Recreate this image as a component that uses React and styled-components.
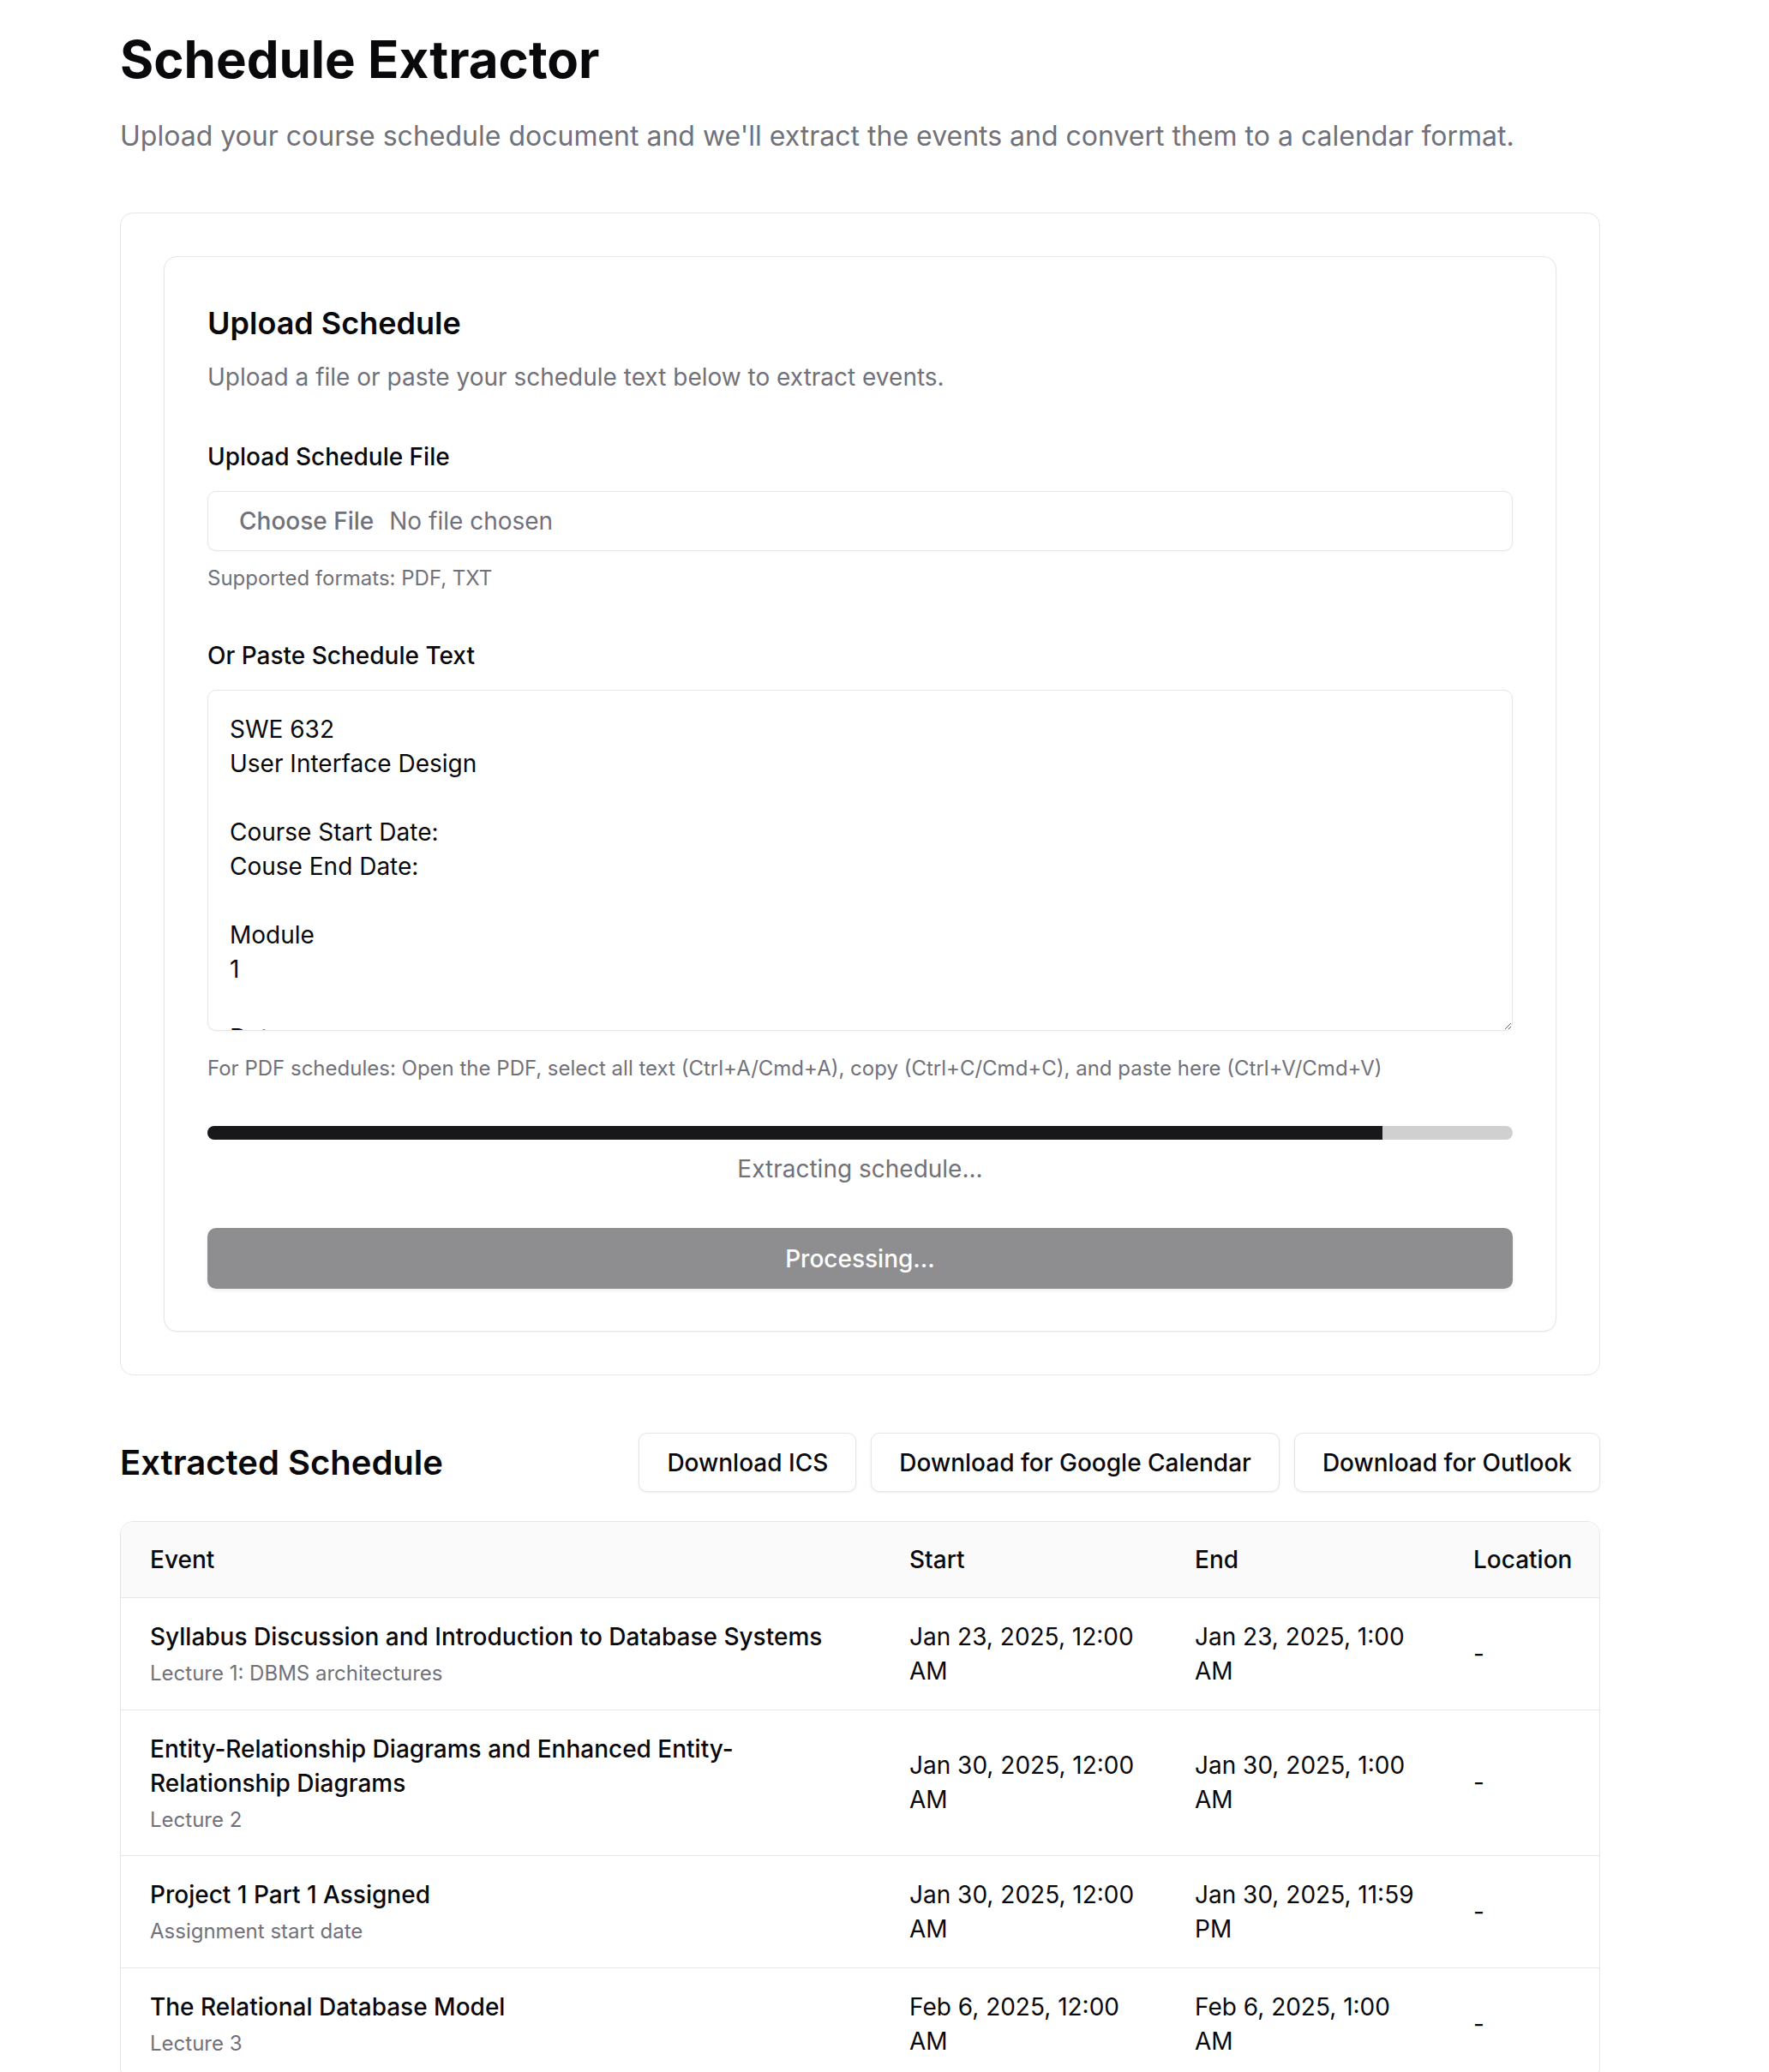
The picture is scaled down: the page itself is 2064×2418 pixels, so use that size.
import styled, { createGlobalStyle } from 'styled-components';

const GlobalStyle = createGlobalStyle`
  * {
    box-sizing: border-box;
  }

  body {
    margin: 0;
    background: #ffffff;
    color: #09090b;
    font-family: Inter, 'Noto Sans', 'Liberation Sans', sans-serif;
  }
`;

const Page = styled.main`
  width: 1867px;
  padding: 33px 0 60px 140px;
`;

const Title = styled.h1`
  margin: 0;
  font-size: 60px;
  line-height: 72px;
  font-weight: 700;
`;

const Lead = styled.p`
  margin: 30px 0 65px;
  font-size: 32px;
  line-height: 48px;
  color: #71717a;
`;

const Card = styled.section`
  border: 1px solid #e6e6e8;
  border-radius: 15px;
  padding: ${(p) => (p.$inner ? '56px 50px 49px' : '50px')};
  background: #ffffff;
  box-shadow: ${(p) => (p.$inner ? '0 1px 2px rgba(0, 0, 0, 0.05)' : 'none')};
`;

const CardTitle = styled.h2`
  margin: 0;
  font-size: 36px;
  line-height: 42px;
  font-weight: 600;
`;

const CardText = styled.p`
  margin: 22px 0 0;
  font-size: 28px;
  line-height: 40px;
  color: #71717a;
`;

const Field = styled.div`
  display: flex;
  flex-direction: column;
  margin-top: ${(p) => p.$gap || 54}px;
`;

const Label = styled.label`
  font-size: 28px;
  line-height: 40px;
  font-weight: 500;
  margin-bottom: 20px;
`;

const FileInput = styled.input`
  height: 70px;
  width: 100%;
  padding: 14px 24px;
  border: 1px solid #e6e6e8;
  border-radius: 10px;
  font-family: inherit;
  font-size: 28px;
  line-height: 40px;
  color: #71717a;
  background: #ffffff;
  box-shadow: 0 1px 2px rgba(0, 0, 0, 0.04);

  &::file-selector-button {
    border: 0;
    background: transparent;
    font-family: inherit;
    font-size: 28px;
    line-height: 40px;
    font-weight: 500;
    color: #71717a;
    padding: 0 12px;
    margin-right: 6px;
  }
`;

const Hint = styled.p`
  margin: ${(p) => p.$top || 16}px 0 0;
  font-size: 24px;
  line-height: 32px;
  color: #71717a;
`;

const TextArea = styled.textarea`
  width: 100%;
  height: 398px;
  padding: 25px 25px;
  border: 1px solid #e6e6e8;
  border-radius: 10px;
  font-family: inherit;
  font-size: 28px;
  line-height: 40px;
  color: #09090b;
  resize: vertical;
  overflow: hidden;
  box-shadow: 0 1px 2px rgba(0, 0, 0, 0.04);
`;

const Track = styled.div`
  margin-top: 51px;
  height: 16px;
  border-radius: 8px;
  background: #d0d0d0;
  overflow: hidden;
`;

const Fill = styled.div`
  height: 100%;
  background: #18181b;
`;

const Status = styled.p`
  margin: 14px 0 0;
  text-align: center;
  font-size: 28px;
  line-height: 40px;
  color: #71717a;
`;

const SubmitButton = styled.button`
  margin-top: 49px;
  width: 100%;
  height: 71px;
  border: 0;
  border-radius: 10px;
  background: #8e8e90;
  color: #ffffff;
  font-family: inherit;
  font-size: 28px;
  font-weight: 500;
  box-shadow: 0 2px 4px rgba(0, 0, 0, 0.08);
`;

const ResultsHeader = styled.div`
  display: flex;
  align-items: center;
  justify-content: space-between;
  margin-top: 67px;
`;

const ResultsTitle = styled.h2`
  margin: 0;
  font-size: 40px;
  line-height: 48px;
  font-weight: 600;
`;

const Actions = styled.div`
  display: flex;
  gap: 17px;
`;

const OutlineButton = styled.button`
  height: 69px;
  padding: 0 32px;
  border: 1px solid #e6e6e8;
  border-radius: 10px;
  background: #ffffff;
  color: #09090b;
  font-family: inherit;
  font-size: 28px;
  font-weight: 500;
  box-shadow: 0 1px 3px rgba(0, 0, 0, 0.08);
`;

const TableWrap = styled.div`
  margin-top: 34px;
  border: 1px solid #e6e6e8;
  border-radius: 15px;
  overflow: hidden;
`;

const Table = styled.table`
  width: 100%;
  border-collapse: collapse;
  table-layout: fixed;
`;

const Th = styled.th`
  height: 88px;
  padding: 0 32px 0 34px;
  text-align: left;
  font-size: 28px;
  font-weight: 500;
  background: #fafafa;
  border-bottom: 1px solid #e6e6e8;
`;

const Td = styled.td`
  padding: 25px 30px 25px 34px;
  vertical-align: middle;
  font-size: 28px;
  line-height: 40px;
  border-bottom: 1px solid #e6e6e8;
`;

const EventName = styled.div`
  font-weight: 500;
`;

const EventNote = styled.div`
  margin-top: 7px;
  font-size: 24px;
  line-height: 32px;
  color: #71717a;
`;

const scheduleText = `SWE 632
User Interface Design

Course Start Date:
Couse End Date:

Module
1

Date
Topic
Readings`;

const events = [
  {
    name: 'Syllabus Discussion and Introduction to Database Systems',
    note: 'Lecture 1: DBMS architectures',
    start: 'Jan 23, 2025, 12:00 AM',
    end: 'Jan 23, 2025, 1:00 AM',
  },
  {
    name: 'Entity-Relationship Diagrams and Enhanced Entity-Relationship Diagrams',
    note: 'Lecture 2',
    start: 'Jan 30, 2025, 12:00 AM',
    end: 'Jan 30, 2025, 1:00 AM',
  },
  {
    name: 'Project 1 Part 1 Assigned',
    note: 'Assignment start date',
    start: 'Jan 30, 2025, 12:00 AM',
    end: 'Jan 30, 2025, 11:59 PM',
  },
  {
    name: 'The Relational Database Model',
    note: 'Lecture 3',
    start: 'Feb 6, 2025, 12:00 AM',
    end: 'Feb 6, 2025, 1:00 AM',
  },
];

export default function App() {
  const progress = 90;

  return (
    <>
      <GlobalStyle />
      <Page>
        <Title>Schedule Extractor</Title>
        <Lead>
          Upload your course schedule document and we'll extract the events and
          convert them to a calendar format.
        </Lead>

        <Card>
          <Card $inner>
            <CardTitle>Upload Schedule</CardTitle>
            <CardText>
              Upload a file or paste your schedule text below to extract events.
            </CardText>

            <Field $gap={53}>
              <Label htmlFor='file'>Upload Schedule File</Label>
              <FileInput id='file' type='file' accept='.pdf,.txt' />
              <Hint>Supported formats: PDF, TXT</Hint>
            </Field>

            <Field $gap={54}>
              <Label htmlFor='text'>Or Paste Schedule Text</Label>
              <TextArea id='text' defaultValue={scheduleText} />
              <Hint $top={28}>
                For PDF schedules: Open the PDF, select all text (Ctrl+A/Cmd+A),
                copy (Ctrl+C/Cmd+C), and paste here (Ctrl+V/Cmd+V)
              </Hint>
            </Field>

            <Track>
              <Fill style={{ width: `${progress}%` }} />
            </Track>
            <Status>Extracting schedule...</Status>

            <SubmitButton type='button' disabled>
              Processing...
            </SubmitButton>
          </Card>
        </Card>

        <ResultsHeader>
          <ResultsTitle>Extracted Schedule</ResultsTitle>
          <Actions>
            <OutlineButton type='button'>Download ICS</OutlineButton>
            <OutlineButton type='button'>Download for Google Calendar</OutlineButton>
            <OutlineButton type='button'>Download for Outlook</OutlineButton>
          </Actions>
        </ResultsHeader>

        <TableWrap>
          <Table>
            <colgroup>
              <col style={{ width: 886 }} />
              <col style={{ width: 333 }} />
              <col style={{ width: 325 }} />
              <col />
            </colgroup>
            <thead>
              <tr>
                <Th>Event</Th>
                <Th>Start</Th>
                <Th>End</Th>
                <Th>Location</Th>
              </tr>
            </thead>
            <tbody>
              {events.map((event) => (
                <tr key={event.name}>
                  <Td>
                    <EventName>{event.name}</EventName>
                    <EventNote>{event.note}</EventNote>
                  </Td>
                  <Td>{event.start}</Td>
                  <Td>{event.end}</Td>
                  <Td>-</Td>
                </tr>
              ))}
            </tbody>
          </Table>
        </TableWrap>
      </Page>
    </>
  );
}
